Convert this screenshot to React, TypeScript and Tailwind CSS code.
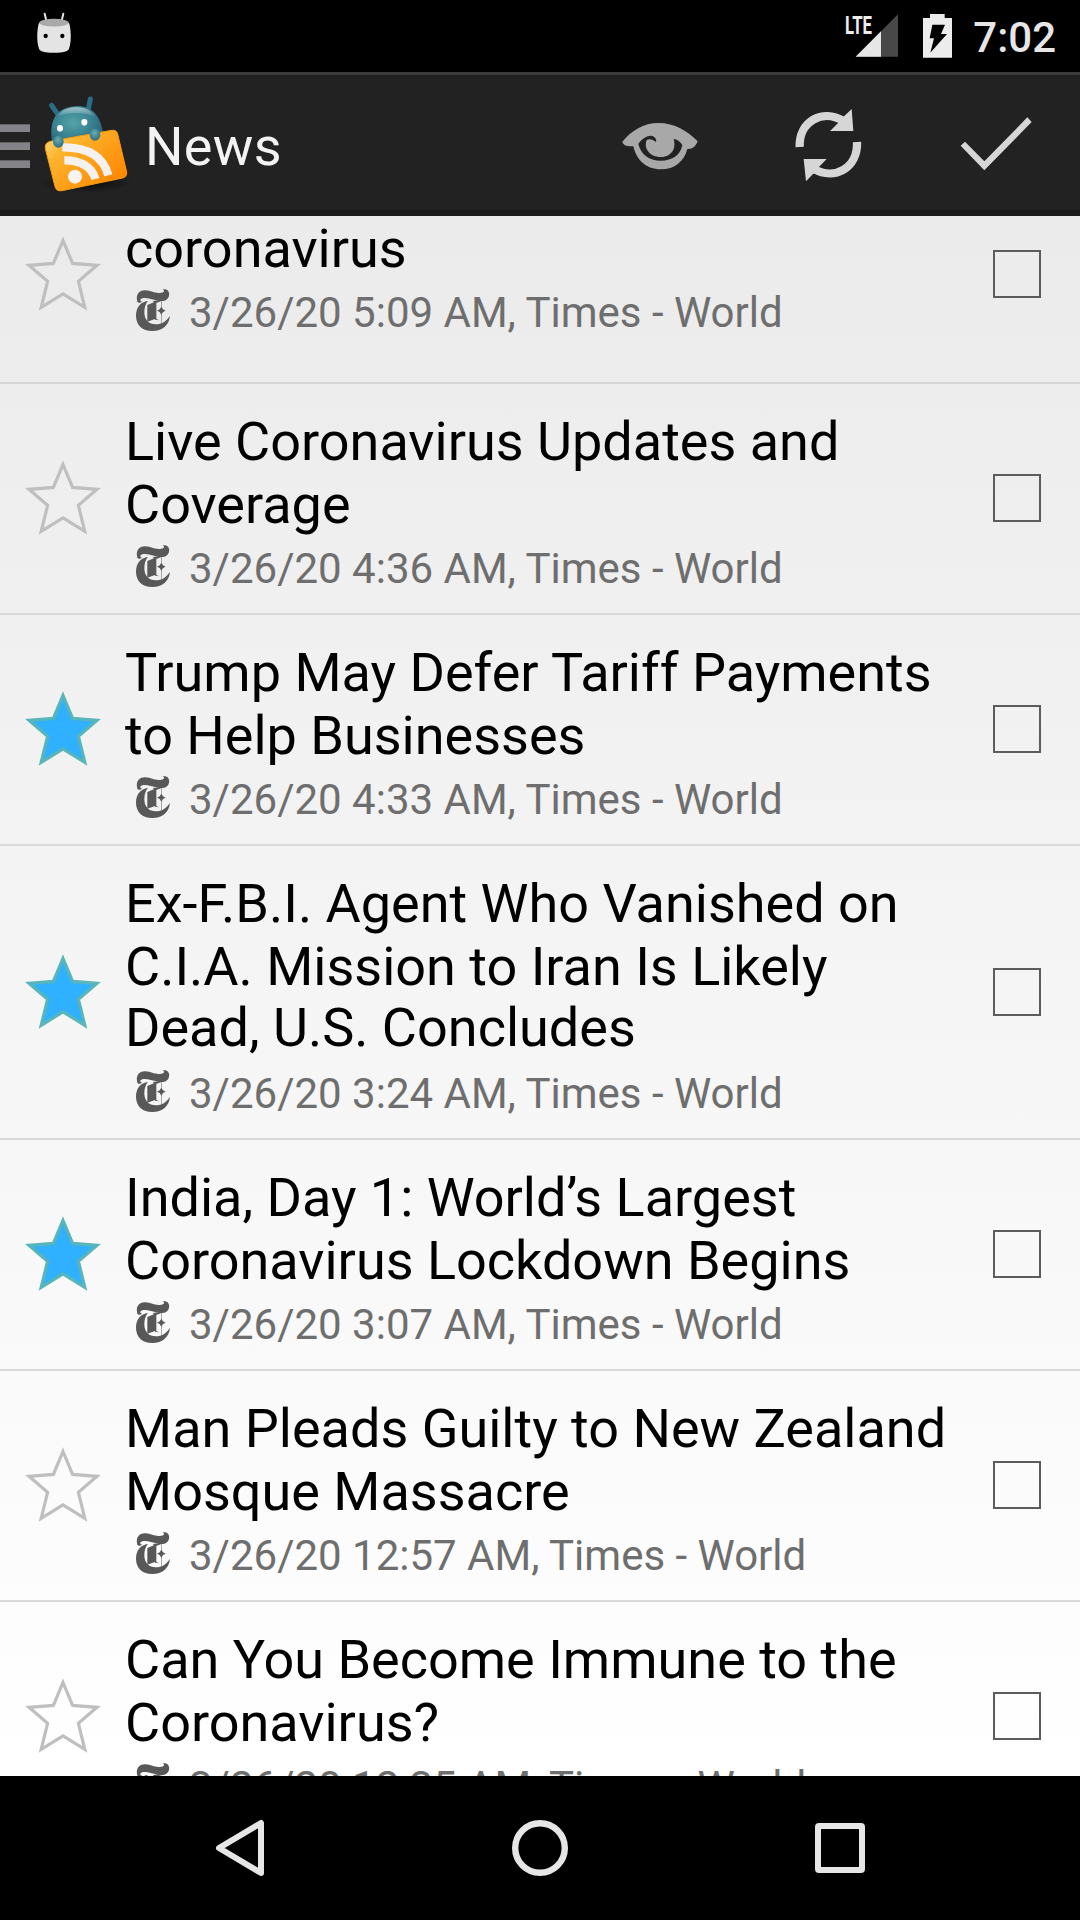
import React from "react";

type Story = { title: string[]; meta: string; starred: boolean };

const stories: Story[] = [
  { title: ["Live Coronavirus Updates and", "Coverage"], meta: "3/26/20 4:36 AM, Times - World", starred: false },
  { title: ["Trump May Defer Tariff Payments", "to Help Businesses"], meta: "3/26/20 4:33 AM, Times - World", starred: true },
  {
    title: ["Ex-F.B.I. Agent Who Vanished on", "C.I.A. Mission to Iran Is Likely", "Dead, U.S. Concludes"],
    meta: "3/26/20 3:24 AM, Times - World",
    starred: true,
  },
  { title: ["India, Day 1: World’s Largest", "Coronavirus Lockdown Begins"], meta: "3/26/20 3:07 AM, Times - World", starred: true },
  { title: ["Man Pleads Guilty to New Zealand", "Mosque Massacre"], meta: "3/26/20 12:57 AM, Times - World", starred: false },
  { title: ["Can You Become Immune to the", "Coronavirus?"], meta: "3/26/20 12:35 AM, Times - World", starred: false },
];

function Star({ on }: { on: boolean }) {
  return (
    <svg className="mb-px ml-6 h-[78px] w-[78px] shrink-0" viewBox="0 0 78 78">
      <path
        d="M39 5.5 L48.6 28.4 L73 30.3 L54.4 46.4 L60.8 72.3 L39 58.8 L17.2 72.3 L23.6 46.4 L5 30.3 L29.4 28.4 Z"
        fill={on ? "#2fb1ff" : "none"}
        stroke={on ? "#58b5b9" : "#bfbfbf"}
        strokeWidth="3.2"
      />
    </svg>
  );
}

function SourceLogo() {
  return (
    <svg className="mt-px ml-[11px] h-[42px] w-[34px] shrink-0" viewBox="0 0 102 126" fill="#585858">
      <path d="M4 38 C-2 16 10 3 28 4 C48 5 58 15 76 11 C86 9 86 4 80 1 C93 -2 102 7 99 20 C96 34 82 39 66 35 C46 31 30 24 19 28 C10 31 12 37 19 38 C12 43 6 42 4 38 Z" />
      <path d="M36 36 C14 38 0 55 0 80 C0 108 19 126 49 126 C79 126 99 109 102 80 C91 97 77 106 60 106 C38 106 25 92 25 70 C25 55 29 43 36 36 Z" />
      <path d="M34 48 L57 38 L57 90 L34 98 Z" />
      <path d="M50 36 L76 33 L76 36 L61 42 L61 90 L70 94 L57 92 L57 42 Z" />
      <path d="M75 33 H78 V104 H75 Z" opacity=".5" />
      <path d="M76 53 L81 61 L89 65 L81 69 L76 77 L71 69 L63 65 L71 61 Z" />
    </svg>
  );
}

function Meta({ text }: { text: string }) {
  return (
    <div className="mt-2 flex h-[49px] items-start">
      <SourceLogo />
      <span className="ml-[19px] text-[42px] leading-[49px] text-[#6e6e6e]">{text}</span>
    </div>
  );
}

function Checkbox() {
  return <div className="mr-[39px] mb-px h-12 w-12 shrink-0 border-2 border-[#5c5c5c]" />;
}

function Row({ story }: { story: Story }) {
  return (
    <div className="flex shrink-0 items-center border-b-2 border-[#d9d9d9]">
      <Star on={story.starred} />
      <div className="ml-[23px] flex-1 pt-[26px] pb-5 whitespace-nowrap">
        {story.title.map((line, i) => (
          <div key={line} className={i === 2 ? "-mt-0.5 h-[65px] text-[54px] leading-[63px] text-black" : "h-[63px] text-[54px] leading-[63px] text-black"}>
            {line}
          </div>
        ))}
        <Meta text={story.meta} />
      </div>
      <Checkbox />
    </div>
  );
}

function StatusBar() {
  return (
    <div className="flex h-[72px] shrink-0 items-start bg-black">
      <svg className="ml-9 h-[72px] w-9" viewBox="108 0 108 216">
        <path d="M134 41 L140 66 M190 41 L184 66" stroke="#e4e4e4" strokeWidth="6" strokeLinecap="round" />
        <path d="M117 68 C111 86 109 124 117 146 C120 154 134 158 162 158 C190 158 204 154 207 146 C215 124 213 86 207 68 Z" fill="#e4e4e4" />
        <ellipse cx="162" cy="68" rx="44" ry="11.5" fill="#a9a9a9" />
        <circle cx="137" cy="108" r="6.5" />
        <circle cx="187" cy="108" r="6.5" />
      </svg>
      <svg className="ml-auto h-[72px] w-[60px]" viewBox="60 0 180 216">
        <text x="75" y="101" fontFamily="Roboto" fontWeight="700" fontSize="79" fill="#ededed" textLength="81" lengthAdjust="spacingAndGlyphs">
          LTE
        </text>
        <path d="M107 170 L234 43 V170 Z" fill="#484848" />
        <path d="M107 170 L183 94 V170 Z" fill="#e6e6e6" />
      </svg>
      <svg className="ml-[18px] h-[72px] w-[36px]" viewBox="294 0 108 216">
        <path d="M309 54 H330 V42 H374 V54 H396 V173 H309 Z" fill="#ececec" />
        <path d="M337 74 H375 L363 102 H381 L331 158 L342 115 H329 Z" />
      </svg>
      <span className="mt-[13px] mr-[24px] ml-[19px] text-[42px] leading-[49px] font-medium text-[#e6e6e6]">7:02</span>
    </div>
  );
}

function AppLogo() {
  return (
    <svg className="ml-2 h-[105px] w-24 shrink-0" viewBox="114 270 288 315">
      <defs>
        <radialGradient id="head" cx=".42" cy=".45" r=".65">
          <stop offset="0" stopColor="#55a3a8" />
          <stop offset=".5" stopColor="#3b8694" />
          <stop offset="1" stopColor="#276078" />
        </radialGradient>
        <linearGradient id="shine" x1="0" y1="0" x2="0" y2="1">
          <stop offset="0" stopColor="#fff" stopOpacity=".55" />
          <stop offset="1" stopColor="#fff" stopOpacity="0" />
        </linearGradient>
        <linearGradient id="card" x1="0" y1="0" x2="1" y2=".8">
          <stop offset="0" stopColor="#ffdf8c" />
          <stop offset=".3" stopColor="#fdb32c" />
          <stop offset="1" stopColor="#ff8400" />
        </linearGradient>
        <radialGradient id="shade">
          <stop offset="0" stopColor="#000" stopOpacity=".7" />
          <stop offset="1" stopColor="#000" stopOpacity="0" />
        </radialGradient>
        <radialGradient id="hand" cx=".45" cy=".35" r=".65">
          <stop offset="0" stopColor="#66afb1" />
          <stop offset="1" stopColor="#2b6e80" />
        </radialGradient>
      </defs>
      <ellipse cx="258" cy="548" rx="140" ry="30" fill="url(#shade)" />
      <path d="M155 316 L174 344 M271 297 L265 328" stroke="#2b6d86" strokeWidth="15" strokeLinecap="round" />
      <path d="M156 425 C148 372 160 330 212 320 C270 310 300 340 309 400 L250 430 Z" fill="url(#head)" />
      <path d="M172 350 C184 326 214 320 236 322 C262 324 278 336 286 352 C250 334 205 336 172 350 Z" fill="url(#shine)" />
      <ellipse cx="180" cy="385" rx="9" ry="10" fill="#fff" />
      <ellipse cx="253" cy="367" rx="9" ry="10" fill="#fff" />
      <path
        d="M151 424 L335 391 Q350 389 353 402 L380 516 Q382 530 368 534 L186 572 Q169 575 165 560 L136 446 Q133 429 151 424 Z"
        fill="url(#card)"
        stroke="#f39a12"
        strokeWidth="3"
      />
      <g fill="none" stroke="#f4f1ef">
        <path d="M187 442 C265 441 310 470 325 526" strokeWidth="25" />
        <path d="M193 481 C240 480 276 500 286 537" strokeWidth="25" />
      </g>
      <circle cx="225" cy="530" r="21" fill="#f6f3f0" />
      <ellipse cx="175" cy="425" rx="16" ry="18" fill="url(#hand)" />
      <ellipse cx="285" cy="404" rx="16" ry="18" fill="url(#hand)" />
    </svg>
  );
}

function ActionBar() {
  return (
    <div className="flex h-36 shrink-0 items-center border-t-[3px] border-b-[6px] border-t-[#3b3b3b] border-b-[#1a1a1a] bg-[#222222]">
      <svg className="h-[135px] w-[30px] shrink-0" viewBox="0 225 90 405" fill="#848488">
        <rect x="0" y="373" width="90" height="23" />
        <rect x="0" y="427" width="90" height="23" />
        <rect x="0" y="481" width="90" height="23" />
      </svg>
      <AppLogo />
      <span className="ml-[11px] pt-[7px] text-[54px] leading-[63px] tracking-[0.3px] text-[#f3f3f3]">News</span>
      <div className="ml-auto flex">
        <div className="flex w-[168px] justify-center">
          <svg className="h-[95px] w-24" viewBox="96 75 288 285">
            <path
              fillRule="evenodd"
              fill="#a8a8a8"
              d="M127 215 C155 182 190 159 236 159 C284 159 322 183 353 214 C347 229 338 238 322 237 C312 274 285 298 242 298 C200 298 169 271 160 229 C145 229 130 228 127 215 Z M175 222 C183 254 207 272 242 272 C278 272 302 254 307 225 C300 214 291 208 281 207 C290 239 272 261 242 261 C209 261 190 235 200 210 C209 205 220 210 228 216 C231 207 224 199 213 197 C196 198 183 209 175 222 Z"
            />
          </svg>
        </div>
        <div className="flex w-[168px] justify-center">
          <svg className="h-[95px] w-24" viewBox="600 75 288 285">
            <g fill="none" stroke="#d6d6d6" strokeWidth="25">
              <path d="M659 231 C656 154 728 115 790 153" />
              <path d="M831 216 C834 295 763 332 702 297" />
            </g>
            <path d="M815 117 L820 183 H750 L775 158 L770 150 L792 139 Z M678 334 L671 267 H740 L716 292 L720 299 L699 312 Z" fill="#d6d6d6" />
          </svg>
        </div>
        <div className="flex w-[168px] justify-center">
          <svg className="h-[95px] w-24" viewBox="1104 75 288 285">
            <path d="M1142 227 L1155 215 L1213 274 L1342 142 L1355 156 L1213 301 Z" fill="#d6d6d6" />
          </svg>
        </div>
      </div>
    </div>
  );
}

function NavBar() {
  return (
    <div className="flex h-36 shrink-0 items-center bg-black">
      <svg className="ml-[210px] h-[60px] w-[60px]" viewBox="0 0 60 60" fill="none" stroke="#e6e6e6" strokeWidth="6" strokeLinejoin="round">
        <path d="M51 5 V55 L9 30 Z" />
      </svg>
      <svg className="ml-[240px] h-[60px] w-[60px]" viewBox="0 0 60 60" fill="none" stroke="#e6e6e6" strokeWidth="6.4">
        <circle cx="30" cy="30" r="24.8" />
      </svg>
      <svg className="ml-[240px] h-[60px] w-[60px]" viewBox="0 0 60 60" fill="none" stroke="#e6e6e6" strokeWidth="6">
        <rect x="8" y="8" width="44" height="44" rx="1" />
      </svg>
    </div>
  );
}

export default function App() {
  return (
    <div className="flex h-[1920px] w-[1080px] flex-col overflow-hidden font-[Roboto,sans-serif]">
      <StatusBar />
      <ActionBar />
      <div className="flex h-[1560px] flex-col overflow-hidden bg-linear-to-b from-[#ebebeb] to-white">
        <div className="-mt-[50px] flex h-[218px] shrink-0 items-center border-b-2 border-[#d6d6d6]">
          <Star on={false} />
          <div className="ml-[23px] flex-1 self-start pt-[51px] whitespace-nowrap">
            <div className="h-[63px] text-[54px] leading-[63px] text-black">coronavirus</div>
            <Meta text="3/26/20 5:09 AM, Times - World" />
          </div>
          <Checkbox />
        </div>
        {stories.map((s) => (
          <Row key={s.meta} story={s} />
        ))}
      </div>
      <NavBar />
    </div>
  );
}
